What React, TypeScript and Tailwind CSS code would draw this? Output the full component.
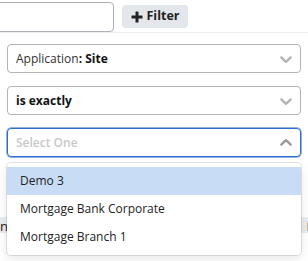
import React from "react";

function Chevron({ up = false, color }: { up?: boolean; color: string }) {
  return (
    <svg
      width="20"
      height="20"
      viewBox="0 0 20 20"
      className={up ? "rotate-180" : ""}
      fill={color}
    >
      <path d="M4.516 7.548c0.436-0.446 1.043-0.481 1.576 0l3.908 3.747 3.908-3.747c0.533-0.481 1.141-0.446 1.574 0 0.436 0.445 0.408 1.197 0 1.615-0.406 0.418-4.695 4.502-4.695 4.502-0.217 0.223-0.502 0.335-0.787 0.335s-0.57-0.112-0.789-0.335c0 0-4.287-4.084-4.695-4.502s-0.436-1.17 0-1.615z" />
    </svg>
  );
}

export default function App() {
  return (
    <div className="relative w-[308px] h-[261px] overflow-hidden bg-white font-['Open_Sans',sans-serif] text-[#333]">
      {/* top bar */}
      <div className="flex items-start h-[32px]">
        <div className="ml-[-40px] mt-[2px] w-[154px] h-[30px] shrink-0 rounded-[4px] border border-[#aab0b6] bg-white" />
        <button className="ml-[8px] mt-[5px] h-[23px] w-[66px] shrink-0 rounded-[4px] bg-[#e3e6ea] flex items-center justify-center gap-[4px] text-[12.5px] font-bold text-[#222]">
          <svg width="12" height="12" viewBox="0 0 12 12" fill="#222">
            <rect x="4.5" y="0.5" width="3" height="11" rx="0.5" />
            <rect x="0.5" y="4.5" width="11" height="3" rx="0.5" />
          </svg>
          <span>Filter</span>
        </button>
      </div>

      {/* filter panel */}
      <div className="border-t border-[#eeeeee] px-[7px] pt-[11px] flex flex-col gap-[13px]">
        <div className="h-[29px] rounded-[4px] border border-[#b3b3b3] flex items-center pl-[8px] pr-[4px] text-[12px]">
          <span className="flex-1">
            Application<span className="font-bold text-[#111]">: Site</span>
          </span>
          <Chevron color="#b3b3b3" />
        </div>
        <div className="h-[29px] rounded-[4px] border border-[#b3b3b3] flex items-center pl-[8px] pr-[4px] text-[12px] font-bold text-[#111]">
          <span className="flex-1">is exactly</span>
          <Chevron color="#b3b3b3" />
        </div>
        <div className="relative">
          <div className="h-[29px] rounded-[4px] border border-[#2b6cc9] shadow-[0_0_0_0.5px_#2b6cc9] flex items-center pl-[8px] pr-[4px] text-[12px] font-semibold text-[#c8c8c8]">
            <span className="flex-1">Select One</span>
            <Chevron up color="#999999" />
          </div>
          <div className="absolute left-0 right-0 top-full mt-[6px] z-10 rounded-[4px] bg-white py-[4px] shadow-[0_0_0_1px_rgba(0,0,0,0.1),0_4px_11px_rgba(0,0,0,0.1)] text-[12px] text-[#222]">
            <div className="h-[28px] flex items-center px-[13px] bg-[#c8ddf5]">Demo 3</div>
            <div className="h-[28px] flex items-center px-[13px]">Mortgage Bank Corporate</div>
            <div className="h-[28px] flex items-center px-[13px]">Mortgage Branch 1</div>
          </div>
        </div>
      </div>

      {/* table header behind */}
      <div className="mt-[60px] h-[16px] w-[316px] bg-[#e9ecef] flex items-end justify-between text-[13px] leading-[14px] text-[#222]">
        <span>n</span>
        <span>D</span>
      </div>
    </div>
  );
}
